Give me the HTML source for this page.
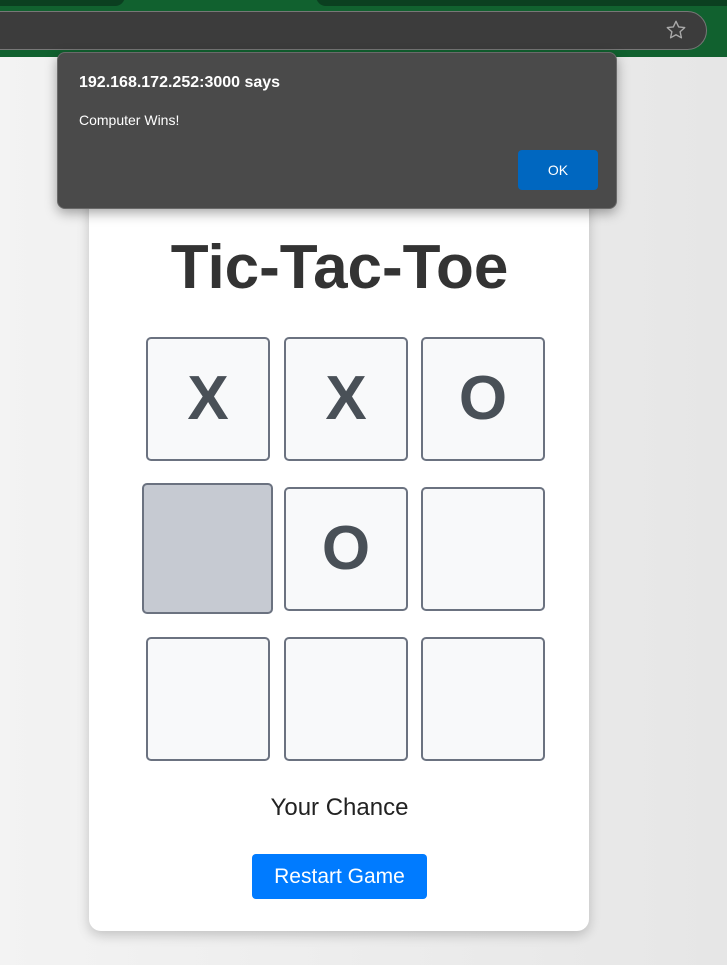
<!DOCTYPE html>
<html><head><style>
*{margin:0;padding:0;box-sizing:border-box}
body{width:727px;height:965px;overflow:hidden;background:linear-gradient(90deg,#f3f3f3,#e6e6e6);font-family:"Liberation Sans",sans-serif;position:relative}
.top{position:absolute;left:0;top:0;width:727px;height:57px;background:#11612f}
.tab1{position:absolute;left:-20px;top:-10px;width:145px;height:16px;background:#0b3f20;border-radius:0 0 10px 10px}
.tab2{position:absolute;left:316px;top:-10px;width:420px;height:16px;background:#0b3f20;border-radius:0 0 0 10px}
.addr{position:absolute;left:-20px;top:11px;width:727px;height:39px;background:#3c3c3c;border:1px solid #777;border-radius:20px}
.star{position:absolute;left:665px;top:19px}
.card{position:absolute;left:89px;top:150px;width:500px;height:781px;background:#fff;border-radius:12px;box-shadow:0 4px 12px rgba(0,0,0,.2)}
h1{position:absolute;left:0;width:679px;top:230px;text-align:center;font-size:62px;font-weight:bold;color:#333;line-height:76px}
.c{position:absolute;width:124px;height:124px;border:2px solid #6b7280;border-radius:5px;background:#f8f9fa;color:#495057;font-size:62px;font-weight:bold;text-align:center;line-height:120px}
.h{background:#c6cad2}
.msg{position:absolute;left:0;width:679px;top:794px;text-align:center;font-size:24px;color:#222}
.btn{position:absolute;left:252px;top:854px;width:175px;height:45px;background:#007bff;border-radius:4px;color:#fff;font-size:21px;text-align:center;line-height:45px}
.dlg{position:absolute;left:57px;top:52px;width:560px;height:157px;background:#4a4a4a;border:1px solid #6a6a6a;border-radius:8px;box-shadow:0 4px 12px rgba(0,0,0,.35);color:#fff}
.dlg b{position:absolute;left:21px;top:21px;font-size:16px}
.dlg span{position:absolute;left:21px;top:59px;font-size:14px;font-weight:300}
.ok{position:absolute;left:460px;top:97px;width:80px;height:40px;background:#0067c0;border-radius:4px;text-align:center;line-height:40px;font-size:14px}
</style></head><body>
<div class="top"><div class="tab1"></div><div class="tab2"></div><div class="addr"></div>
<svg class="star" width="22" height="22" viewBox="0 0 24 24"><path d="M12 2.5l2.9 6.2 6.6.7-5 4.5 1.4 6.6L12 17.2l-5.9 3.3 1.4-6.6-5-4.5 6.6-.7z" fill="none" stroke="#aaa" stroke-width="1.5" stroke-linejoin="round"/></svg></div>
<div class="card"></div>
<h1>Tic-Tac-Toe</h1>
<div class="c" style="left:146px;top:337px">X</div>
<div class="c" style="left:284px;top:337px">X</div>
<div class="c" style="left:421px;top:337px">O</div>
<div class="c h" style="left:142px;top:483px;width:131px;height:131px"></div>
<div class="c" style="left:284px;top:487px">O</div>
<div class="c" style="left:421px;top:487px"></div>
<div class="c" style="left:146px;top:637px"></div>
<div class="c" style="left:284px;top:637px"></div>
<div class="c" style="left:421px;top:637px"></div>
<div class="msg">Your Chance</div>
<div class="btn">Restart Game</div>
<div class="dlg"><b>192.168.172.252:3000 says</b><span>Computer Wins!</span><div class="ok">OK</div></div>
</body></html>
